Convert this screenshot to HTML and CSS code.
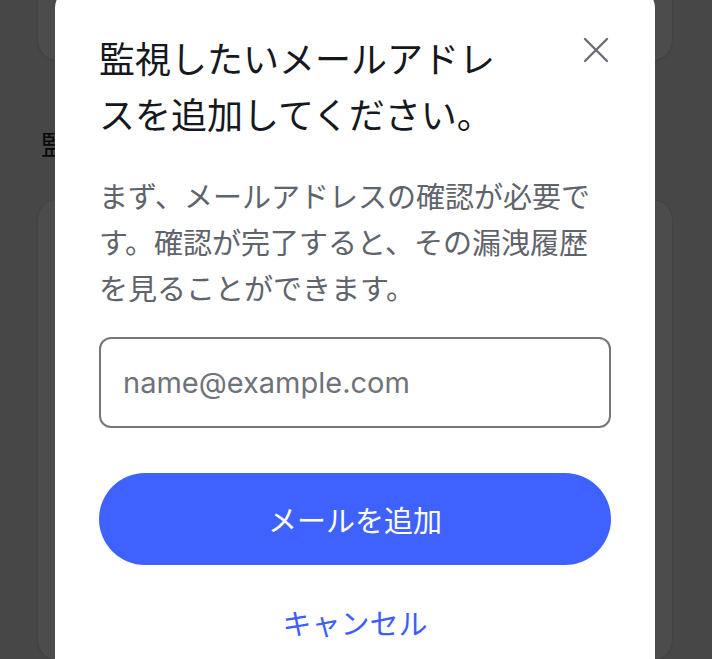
FILE: index.html
```html
<!DOCTYPE html>
<html lang="ja">
<head>
<meta charset="utf-8">
<title>メールを追加</title>
<link rel="stylesheet" href="styles.css">
</head>
<body>
<div class="page">
  <div class="card card-top"></div>
  <h2 class="section-title">監視中のメールアドレス</h2>
  <div class="card card-main"></div>
</div>
<div class="overlay"></div>
<div class="modal" role="dialog">
  <button class="close" aria-label="閉じる">
    <svg width="26" height="26" viewBox="0 0 26 26"><path d="M2 2 L24 24 M24 2 L2 24" stroke="#6b6e75" stroke-width="2.4" stroke-linecap="round" fill="none"/></svg>
  </button>
  <h1 class="title">監視したいメールアドレスを追加してください。</h1>
  <p class="desc">まず、メールアドレスの確認が必要です。確認が完了すると、その漏洩履歴を見ることができます。</p>
  <input class="email" type="email" placeholder="name@example.com">
  <button class="primary">メールを追加</button>
  <button class="cancel">キャンセル</button>
</div>
</body>
</html>
```
FILE: styles.css
```css
* { box-sizing: border-box; }
html, body { margin: 0; padding: 0; }
body {
  width: 712px;
  height: 659px;
  overflow: hidden;
  background: #efeff1;
  font-family: "Noto Sans CJK JP", "Noto Sans", sans-serif;
  position: relative;
}
.page {
  padding: 0 40px 0 38px;
}
.card {
  background: #fff;
  border-radius: 20px;
  box-shadow: 0 0 0 1px rgba(0,0,0,0.06), 0 2px 6px rgba(0,0,0,0.08);
}
.card-top {
  margin-top: -40px;
  height: 100px;
}
.section-title {
  margin: 68px 0 0 3px;
  font-size: 27px;
  line-height: 32px;
  font-weight: 400;
  color: #1b1d22;
  white-space: nowrap;
}
.card-main {
  margin-top: 40px;
  height: 460px;
}
.overlay {
  position: absolute;
  inset: 0;
  background: rgba(0,0,0,0.7);
}
.modal {
  position: absolute;
  left: 55px;
  top: -12px;
  bottom: -40px;
  width: 600px;
  background: #fff;
  border-radius: 20px;
  padding: 41px 44px 0 44px;
  display: flex;
  flex-direction: column;
}
.close {
  position: absolute;
  right: 46px;
  top: 49px;
  width: 26px;
  height: 26px;
  padding: 0;
  border: 0;
  background: none;
  display: flex;
}
.title {
  margin: 0;
  width: 420px;
  font-size: 36px;
  line-height: 56px;
  font-weight: 400;
  color: #16181d;
}
.desc {
  margin: 31px 0 0;
  font-size: 29px;
  line-height: 46px;
  color: #5f636b;
  font-weight: 400;
}
.email {
  margin-top: 27px;
  height: 91px;
  width: 100%;
  border: 2px solid #74777e;
  border-radius: 12px;
  padding: 0 22px;
  font-family: Inter, "Noto Sans", sans-serif;
  font-size: 29px;
  color: #1c1e24;
  outline: none;
}
.email::placeholder { color: #6f727a; }
.primary {
  margin-top: 45px;
  height: 92px;
  width: 100%;
  border: 0;
  border-radius: 46px;
  background: #3f62ff;
  color: #fff;
  font-family: "Noto Sans CJK JP", sans-serif;
  font-size: 29px;
  font-weight: 400;
}
.cancel {
  margin-top: 34px;
  border: 0;
  background: none;
  color: #3d5efb;
  font-family: "Noto Sans CJK JP", sans-serif;
  font-size: 29px;
  line-height: 46px;
  padding: 0;
  align-self: center;
}
```
